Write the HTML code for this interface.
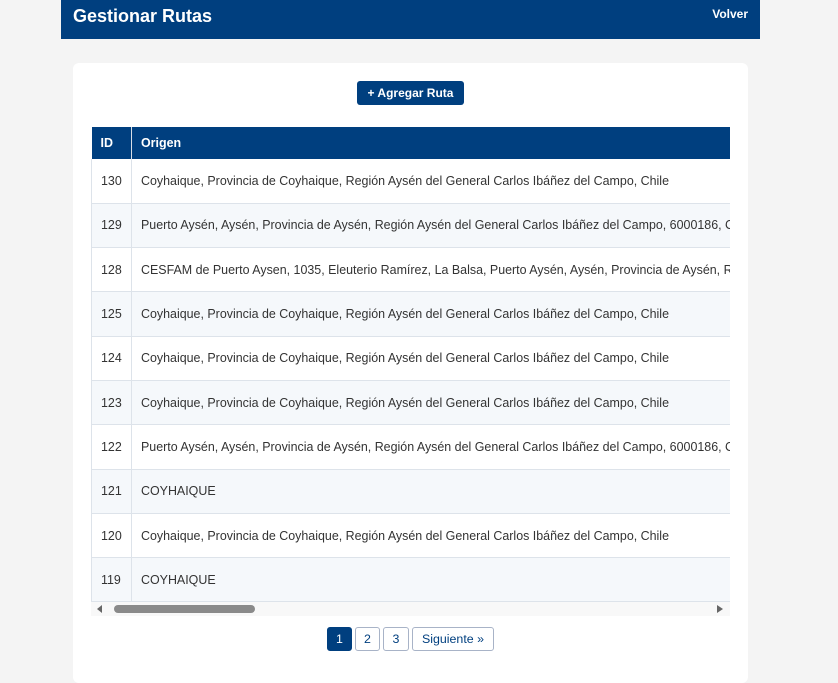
<!DOCTYPE html>
<html><head><meta charset="utf-8"><style>
*{box-sizing:border-box;margin:0;padding:0}
body{width:838px;height:661px;background:#f4f4f4;font-family:"Liberation Sans",Arial,sans-serif;position:relative;overflow:hidden}
.hdr{position:absolute;left:61px;top:0;width:699px;height:39px;background:#003f7f;color:#fff}
.hdr h1{position:absolute;left:12px;top:6px;font-size:18px;font-weight:bold}
.hdr .v{position:absolute;right:12px;top:7px;font-size:12px;font-weight:bold}
.card{position:absolute;left:73px;top:63px;width:675px;height:620px;background:#fff;border-radius:6px}
.btn{position:absolute;left:284px;top:18px;width:107px;height:24px;background:#003f7f;color:#fff;border-radius:3px;font-size:12px;font-weight:bold;text-align:center;line-height:24px}
.tw{position:absolute;left:18px;top:64px;width:639px;height:475px;overflow:hidden}
table{border-collapse:collapse;width:900px;font-size:12.45px;color:#333}
th{background:#003f7f;color:#fff;text-align:left;height:32px;padding:0 9px;font-weight:bold;border-right:1px solid #d9dee6}
td{height:44.3px;padding:0 9px;border-bottom:1px solid #dde3ea;white-space:nowrap}
td:first-child{border-right:1px solid #dde3ea;border-left:1px solid #dde3ea;width:40px}
th:first-child{width:40px}
tr:nth-child(odd) td{background:#f5f8fb}
.sb{position:absolute;left:18px;top:539px;width:639px;height:14px;background:#f8f8f8}
.thumb{position:absolute;left:23px;top:3px;width:141px;height:8px;border-radius:4px;background:#8a8a8a}
.pg{position:absolute;top:564px;height:24px;border:1px solid #a8b3c7;border-radius:3px;color:#003f7f;font-size:12.4px;text-align:center;line-height:22px;background:#fff}
</style></head><body>
<div class="hdr"><h1>Gestionar Rutas</h1><span class="v">Volver</span></div>
<div class="card">
<div class="btn">+ Agregar Ruta</div>
<div class="tw"><table>
<tr><th>ID</th><th>Origen</th></tr>
<tr><td>130</td><td>Coyhaique, Provincia de Coyhaique, Región Aysén del General Carlos Ibáñez del Campo, Chile</td></tr>
<tr><td>129</td><td>Puerto Aysén, Aysén, Provincia de Aysén, Región Aysén del General Carlos Ibáñez del Campo, 6000186, Chile</td></tr>
<tr><td>128</td><td>CESFAM de Puerto Aysen, 1035, Eleuterio Ramírez, La Balsa, Puerto Aysén, Aysén, Provincia de Aysén, Región</td></tr>
<tr><td>125</td><td>Coyhaique, Provincia de Coyhaique, Región Aysén del General Carlos Ibáñez del Campo, Chile</td></tr>
<tr><td>124</td><td>Coyhaique, Provincia de Coyhaique, Región Aysén del General Carlos Ibáñez del Campo, Chile</td></tr>
<tr><td>123</td><td>Coyhaique, Provincia de Coyhaique, Región Aysén del General Carlos Ibáñez del Campo, Chile</td></tr>
<tr><td>122</td><td>Puerto Aysén, Aysén, Provincia de Aysén, Región Aysén del General Carlos Ibáñez del Campo, 6000186, Chile</td></tr>
<tr><td>121</td><td>COYHAIQUE</td></tr>
<tr><td>120</td><td>Coyhaique, Provincia de Coyhaique, Región Aysén del General Carlos Ibáñez del Campo, Chile</td></tr>
<tr><td>119</td><td>COYHAIQUE</td></tr>
</table></div>
<div class="sb"><svg style="position:absolute;left:6px;top:3px" width="6" height="8"><path d="M5 0L0 4L5 8Z" fill="#666"/></svg><div class="thumb"></div><svg style="position:absolute;right:7px;top:3px" width="6" height="8"><path d="M0 0L6 4L0 8Z" fill="#666"/></svg></div>
<div class="pg" style="left:254px;width:25px;background:#003f7f;color:#fff;border-color:#003f7f">1</div>
<div class="pg" style="left:282px;width:25px">2</div>
<div class="pg" style="left:310px;width:26px">3</div>
<div class="pg" style="left:339px;width:82px">Siguiente »</div>
</div>
</body></html>
